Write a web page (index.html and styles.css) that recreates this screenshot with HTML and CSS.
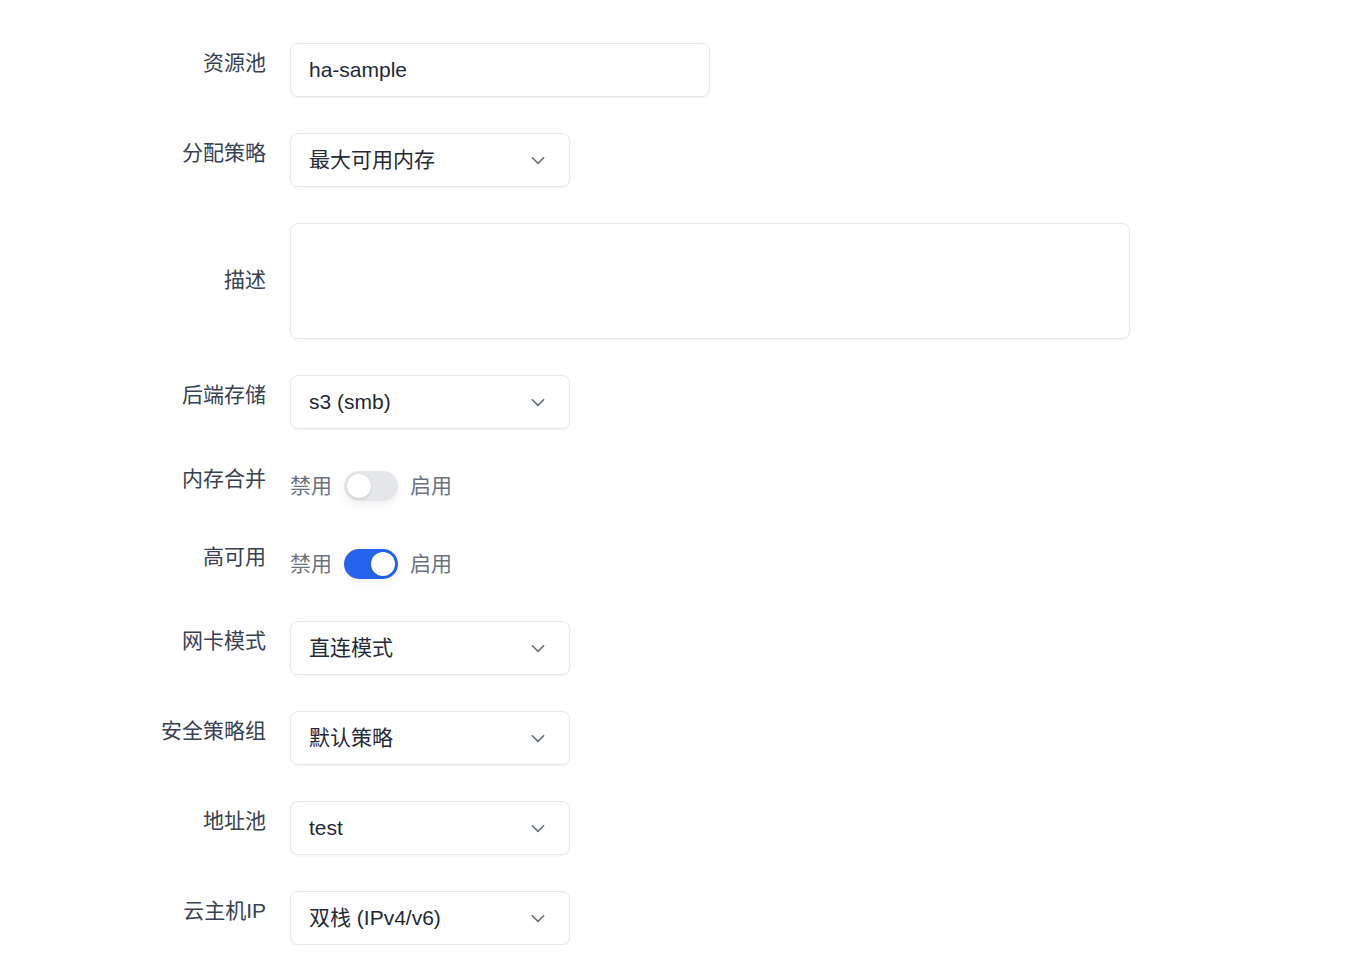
FILE: index.html
```html
<!DOCTYPE html>
<html lang="zh">
<head>
<meta charset="utf-8">
<title>Form</title>
<link rel="stylesheet" href="styles.css">
</head>
<body>
<form class="form">
  <div class="row">
    <label class="label">资源池</label>
    <div class="field input wide"><span class="value">ha-sample</span></div>
  </div>
  <div class="row">
    <label class="label">分配策略</label>
    <div class="field select"><span class="value">最大可用内存</span><svg class="chev" viewBox="0 0 16 16"><path d="M3 6l5 5 5-5"/></svg></div>
  </div>
  <div class="row">
    <label class="label label-center">描述</label>
    <div class="field textarea"></div>
  </div>
  <div class="row">
    <label class="label">后端存储</label>
    <div class="field select"><span class="value">s3 (smb)</span><svg class="chev" viewBox="0 0 16 16"><path d="M3 6l5 5 5-5"/></svg></div>
  </div>
  <div class="row toggle-row">
    <label class="label">内存合并</label>
    <div class="switch-group">
      <span class="sw-text">禁用</span>
      <span class="switch"><span class="knob"></span></span>
      <span class="sw-text">启用</span>
    </div>
  </div>
  <div class="row toggle-row">
    <label class="label">高可用</label>
    <div class="switch-group">
      <span class="sw-text">禁用</span>
      <span class="switch on"><span class="knob"></span></span>
      <span class="sw-text">启用</span>
    </div>
  </div>
  <div class="row">
    <label class="label">网卡模式</label>
    <div class="field select"><span class="value">直连模式</span><svg class="chev" viewBox="0 0 16 16"><path d="M3 6l5 5 5-5"/></svg></div>
  </div>
  <div class="row">
    <label class="label">安全策略组</label>
    <div class="field select"><span class="value">默认策略</span><svg class="chev" viewBox="0 0 16 16"><path d="M3 6l5 5 5-5"/></svg></div>
  </div>
  <div class="row">
    <label class="label">地址池</label>
    <div class="field select"><span class="value">test</span><svg class="chev" viewBox="0 0 16 16"><path d="M3 6l5 5 5-5"/></svg></div>
  </div>
  <div class="row">
    <label class="label">云主机IP</label>
    <div class="field select"><span class="value">双栈 (IPv4/v6)</span><svg class="chev" viewBox="0 0 16 16"><path d="M3 6l5 5 5-5"/></svg></div>
  </div>
</form>
</body>
</html>
```

FILE: styles.css
```css
html, body {
  margin: 0;
  padding: 0;
  background: #ffffff;
}
body {
  font-family: "Liberation Sans", "Noto Sans CJK SC", sans-serif;
  color: #1f2937;
}
.form {
  display: flex;
  flex-direction: column;
  gap: 36px;
  padding-top: 43px;
}
.row {
  display: flex;
  align-items: center;
  gap: 24px;
}
.label {
  width: 266px;
  text-align: right;
  font-size: 21px;
  line-height: 30px;
  color: #374151;
  padding-bottom: 14px;
  box-sizing: border-box;
}
.label-center {
  padding-bottom: 2px;
}
.field {
  box-sizing: border-box;
  height: 54px;
  background: #fff;
  border: 1px solid #e7e8eb;
  border-radius: 8px;
  box-shadow: 0 1px 3px rgba(0, 0, 0, 0.05);
  display: flex;
  align-items: center;
  padding: 0 18px;
}
.input.wide {
  width: 420px;
}
.select {
  width: 280px;
  justify-content: space-between;
  padding-right: 22px;
}
.textarea {
  width: 840px;
  height: 116px;
}
.value {
  font-size: 21px;
  color: #1f2937;
  line-height: 30px;
}
.chev {
  width: 18px;
  height: 18px;
  fill: none;
  stroke: #6b7280;
  stroke-width: 1.5;
  stroke-linecap: round;
  stroke-linejoin: round;
}
.toggle-row {
  height: 42px;
}
.switch-group {
  display: flex;
  align-items: center;
  gap: 12px;
}
.sw-text {
  font-size: 21px;
  color: #6b7280;
  line-height: 30px;
}
.switch {
  position: relative;
  width: 54px;
  height: 30px;
  border-radius: 15px;
  background: #e5e7eb;
  box-shadow: 0 4px 10px rgba(0, 0, 0, 0.06);
  display: block;
}
.switch .knob {
  position: absolute;
  top: 3px;
  left: 3px;
  width: 24px;
  height: 24px;
  border-radius: 50%;
  background: #fff;
  box-shadow: 0 1px 3px rgba(0, 0, 0, 0.15);
}
.switch.on {
  background: #2563eb;
}
.switch.on .knob {
  left: 27px;
}
```
